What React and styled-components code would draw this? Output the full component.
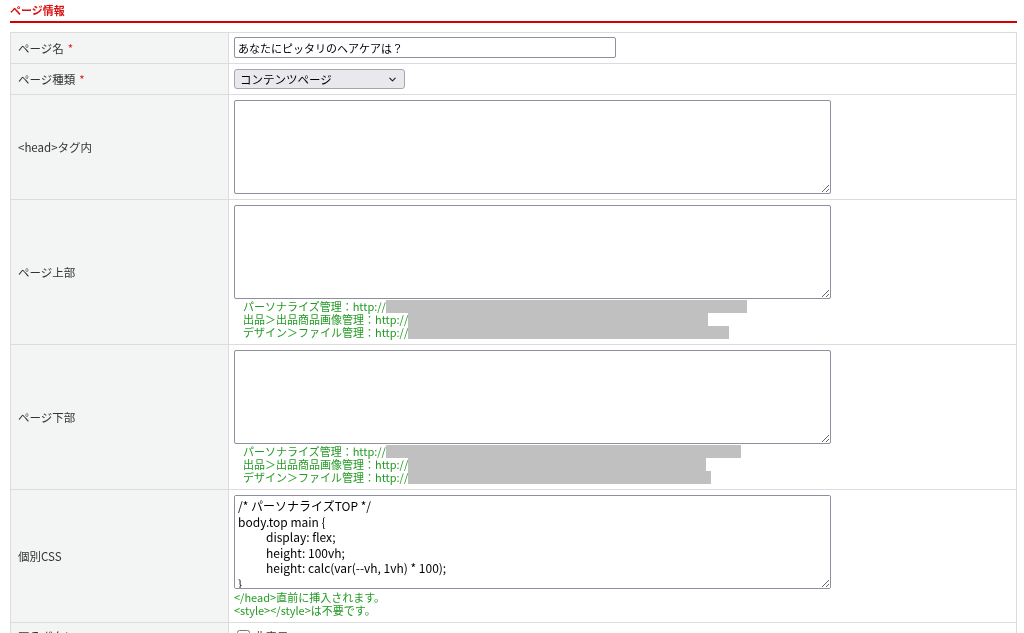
import React from 'react'
import styled, { createGlobalStyle } from 'styled-components'
import { ChevronDown } from 'lucide-react'

const GlobalStyle = createGlobalStyle`
   html, body {
      margin: 0;
      padding: 0;
      background: #fff;
      overflow: hidden;
   }
   body {
      font-family: "Noto Sans CJK JP", "Noto Sans", sans-serif;
      font-size: 11.5px;
      color: #333;
   }
`;

const Page = styled.div`
   padding: 0 7px 0 10px;
`;

const Heading = styled.h2`
   margin: 0;
   padding: 3px 0 4px;
   font-size: 11px;
   line-height: 14px;
   font-weight: bold;
   color: #dd1111;
   border-bottom: 2px solid #d40000;
`;

const Table = styled.table`
   width: 100%;
   margin-top: 9px;
   border-collapse: collapse;
   border: 1px solid #dcdcdc;
   td {
      border: 1px solid #dcdcdc;
   }
`;

const Label = styled.td`
   width: 203px;
   padding: 0 7px;
   background: #f3f4f4;
   color: #333;
   font-size: 11.5px;
   vertical-align: middle;
`;

const Required = styled.span`
   color: #e21a1a;
   margin-left: 4px;
`;

const Value = styled.td`
   padding: 5px 5px;
   vertical-align: top;
`;

const TextInput = styled.input`
   display: block;
   box-sizing: border-box;
   width: 382px;
   height: 21px;
   margin-top: -1px;
   padding: 0 3px;
   border: 1px solid #8f8f9d;
   border-radius: 2px;
   font-family: inherit;
   font-size: 11px;
   color: #000;
`;

const SelectWrap = styled.div`
   position: relative;
   width: 171px;
   height: 20px;
   svg {
      position: absolute;
      right: 7px;
      top: 5px;
      pointer-events: none;
      color: #222;
   }
`;

const Select = styled.select`
   appearance: none;
   display: block;
   box-sizing: border-box;
   width: 100%;
   height: 100%;
   padding: 0 20px 0 5px;
   border: 1px solid #a5a5ad;
   border-radius: 3px;
   background: #e9e9ed;
   font-family: inherit;
   font-size: 11.5px;
   color: #000;
`;

const Area = styled.textarea`
   display: block;
   box-sizing: border-box;
   width: 597px;
   height: 94px;
   margin: 0;
   padding: 2px 3px;
   border: 1px solid #8f8f9d;
   border-radius: 2px;
   font-family: inherit;
   font-size: 12px;
   line-height: 15.5px;
   color: #000;
   tab-size: 28px;
`;

const Notes = styled.div`
   margin-top: ${p => (p.$indent ? '1px' : '2px')};
   padding-left: ${p => (p.$indent ? '9px' : '0')};
   color: #229a22;
   font-size: 11px;
   line-height: 13px;
`;

const NoteLine = styled.div`
   display: flex;
   align-items: center;
   height: 13px;
   white-space: nowrap;
`;

const Masked = styled.span`
   display: inline-block;
   height: 13px;
   background: #c0c0c0;
`;

const CheckLabel = styled.label`
   display: flex;
   align-items: center;
   gap: 4px;
   color: #333;
   input {
      margin: 0 0 0 3px;
      width: 13px;
      height: 13px;
   }
`;

const links = [
   ['パーソナライズ管理：http://', 361],
   ['出品＞出品商品画像管理：http://', 300],
   ['デザイン＞ファイル管理：http://', 321],
];

const links2 = [
   ['パーソナライズ管理：http://', 355],
   ['出品＞出品商品画像管理：http://', 298],
   ['デザイン＞ファイル管理：http://', 303],
];

const css = `/* パーソナライズTOP */
body.top main {
\tdisplay: flex;
\theight: 100vh;
\theight: calc(var(--vh, 1vh) * 100);
}
.top main > section {
\tflex: 1;
}`;

const LinkNotes = ({ items }) => (
   <Notes $indent>
      {items.map(([text, w]) => (
         <NoteLine key={text}>
            {text}
            <Masked style={{ width: w }} />
         </NoteLine>
      ))}
   </Notes>
)

const App = () => {
   return (
      <>
         <GlobalStyle />
         <Page>
            <Heading>ページ情報</Heading>
            <Table>
               <tbody>
                  <tr>
                     <Label>ページ名<Required>*</Required></Label>
                     <Value>
                        <TextInput defaultValue="あなたにピッタリのヘアケアは？" />
                     </Value>
                  </tr>
                  <tr>
                     <Label>ページ種類<Required>*</Required></Label>
                     <Value>
                        <SelectWrap>
                           <Select defaultValue="content">
                              <option value="content">コンテンツページ</option>
                              <option value="top">トップページ</option>
                           </Select>
                           <ChevronDown size={11} strokeWidth={2.5} />
                        </SelectWrap>
                     </Value>
                  </tr>
                  <tr>
                     <Label>&lt;head&gt;タグ内</Label>
                     <Value>
                        <Area />
                     </Value>
                  </tr>
                  <tr>
                     <Label>ページ上部</Label>
                     <Value>
                        <Area />
                        <LinkNotes items={links} />
                     </Value>
                  </tr>
                  <tr>
                     <Label>ページ下部</Label>
                     <Value>
                        <Area />
                        <LinkNotes items={links2} />
                     </Value>
                  </tr>
                  <tr>
                     <Label>個別CSS</Label>
                     <Value>
                        <Area defaultValue={css} />
                        <Notes>
                           <div>&lt;/head&gt;直前に挿入されます。</div>
                           <div>&lt;style&gt;&lt;/style&gt;は不要です。</div>
                        </Notes>
                     </Value>
                  </tr>
                  <tr>
                     <Label>戻るボタン</Label>
                     <Value>
                        <CheckLabel>
                           <input type="checkbox" />
                           非表示
                        </CheckLabel>
                     </Value>
                  </tr>
               </tbody>
            </Table>
         </Page>
      </>
   )
}

export default App
